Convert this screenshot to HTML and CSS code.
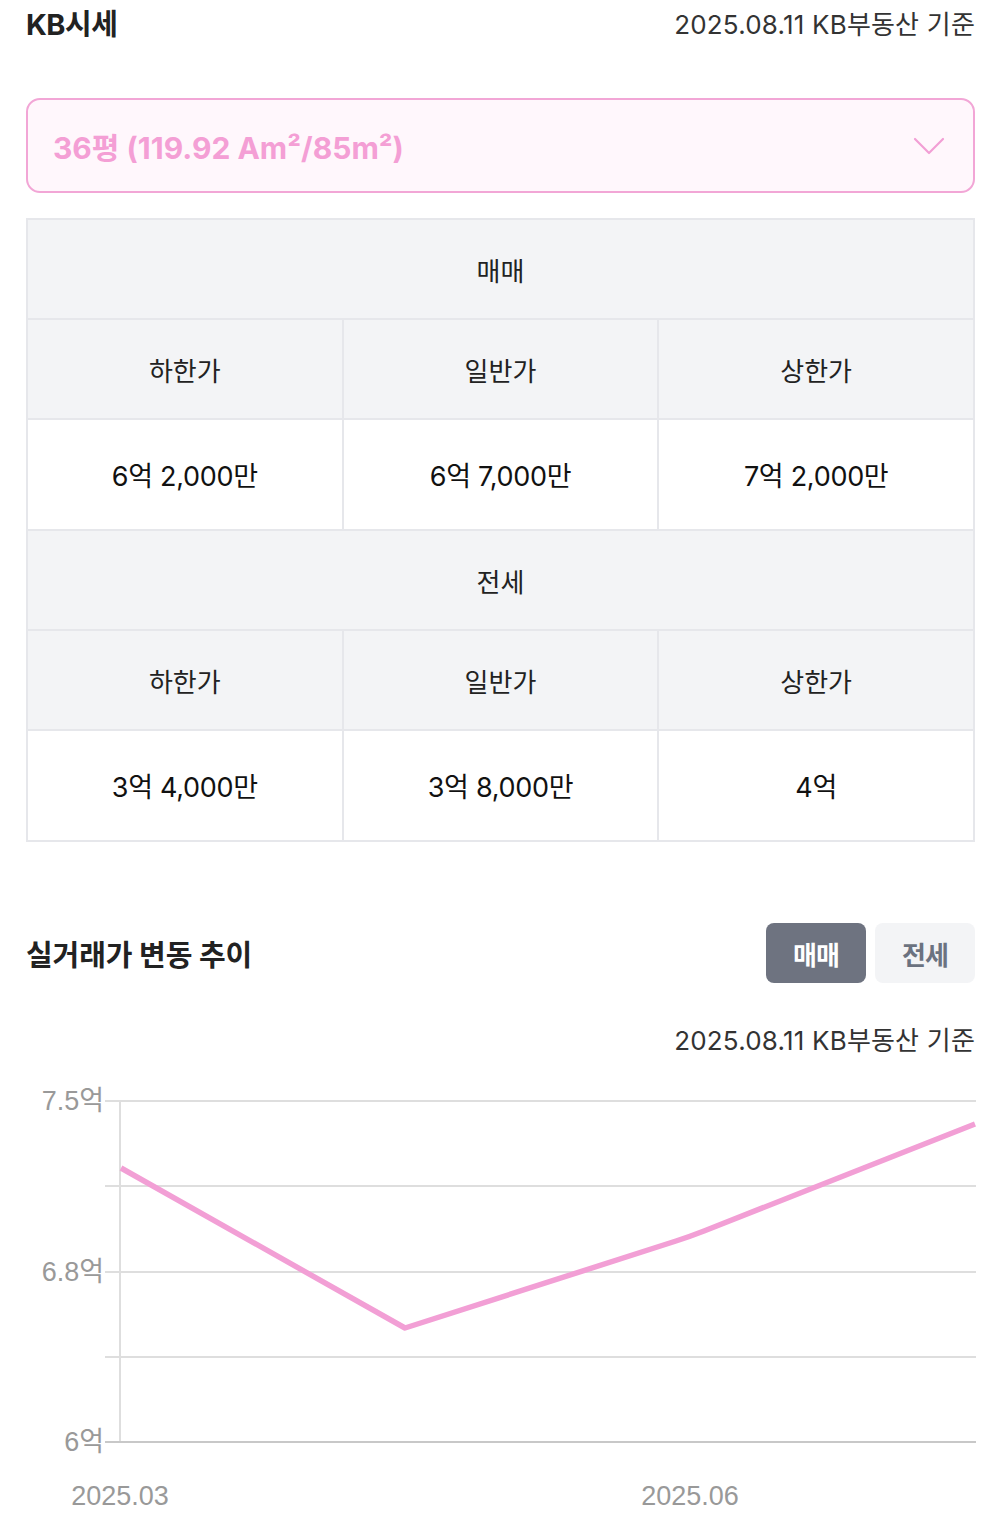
FILE: index.html
```html
<!DOCTYPE html>
<html lang="ko">
<head>
  <meta charset="UTF-8">
  <meta name="viewport" content="width=device-width, initial-scale=1.0">
  <link rel="stylesheet" href="styles.css">
  <title>KB시세</title>
</head>
<body>
  <div class="page">
    <div class="section-head">
      <h2 class="title">KB시세</h2>
      <span class="base-date">2025.08.11 KB부동산 기준</span>
    </div>

    <div class="area-select">
      <span class="area-text">36평 (119.92 Am²/85m²)</span>
      <svg class="chevron" width="32" height="20" viewBox="0 0 32 20">
        <path d="M2 3 L16 17 L30 3" fill="none" stroke="#f29fd5" stroke-width="2.2" stroke-linecap="round" stroke-linejoin="round"/>
      </svg>
    </div>

    <table class="price-table">
      <tr><th colspan="3">매매</th></tr>
      <tr><th>하한가</th><th>일반가</th><th>상한가</th></tr>
      <tr class="values"><td>6억 2,000만</td><td>6억 7,000만</td><td>7억 2,000만</td></tr>
      <tr><th colspan="3">전세</th></tr>
      <tr><th>하한가</th><th>일반가</th><th>상한가</th></tr>
      <tr class="values"><td>3억 4,000만</td><td>3억 8,000만</td><td>4억</td></tr>
    </table>

    <div class="chart-head">
      <h2 class="title chart-title">실거래가 변동 추이</h2>
      <div class="tabs">
        <button class="tab active">매매</button>
        <button class="tab">전세</button>
      </div>
    </div>
    <div class="chart-date">2025.08.11 KB부동산 기준</div>

    <svg class="chart" width="950" height="440" viewBox="0 0 950 440">
      <g stroke="#dedede" stroke-width="2">
        <line x1="79" y1="20" x2="950" y2="20"/>
        <line x1="79" y1="105" x2="950" y2="105"/>
        <line x1="79" y1="191" x2="950" y2="191"/>
        <line x1="79" y1="276" x2="950" y2="276"/>
        <line x1="94" y1="20" x2="94" y2="361"/>
      </g>
      <line x1="79" y1="361" x2="950" y2="361" stroke="#c8c8c8" stroke-width="2"/>
      <g class="axis-label" text-anchor="end">
        <text x="78" y="29">7.5억</text>
        <text x="78" y="200">6.8억</text>
        <text x="78" y="370">6억</text>
      </g>
      <g class="axis-label" text-anchor="middle">
        <text x="94" y="424">2025.03</text>
        <text x="664" y="424">2025.06</text>
      </g>
      <path d="M95 87 L379 247 L650 160 Q664 155.5 678 150 L949 43" fill="none" stroke="#f29fd5" stroke-width="5.5" stroke-linejoin="round"/>
    </svg>
  </div>
</body>
</html>
```

FILE: styles.css
```css
body {
  margin: 0;
  background: #fff;
  font-family: "Inter", "Noto Sans CJK KR", sans-serif;
  color: #222;
}

.page {
  padding: 0 25px 0 26px;
}

.section-head {
  display: flex;
  justify-content: space-between;
  align-items: center;
  height: 44px;
  margin-bottom: 54px;
}

.title {
  margin: 0;
  font-size: 29px;
  font-weight: 700;
  letter-spacing: -0.5px;
  color: #222;
}

.chart-title {
  font-size: 29px;
  letter-spacing: -0.1px;
}

.base-date {
  font-size: 26px;
  letter-spacing: 0.2px;
  color: #333;
}

.area-select {
  display: flex;
  align-items: center;
  justify-content: space-between;
  height: 91px;
  padding: 0 28px 0 25px;
  border: 2px solid #f2a6d6;
  border-radius: 14px;
  background: #fff7fc;
  margin-bottom: 25px;
}

.area-text {
  font-size: 30px;
  font-weight: 700;
  letter-spacing: 0;
  color: #f49fd5;
}

.price-table {
  width: 100%;
  table-layout: fixed;
  border-collapse: collapse;
  border: 2px solid #e6e7eb;
}

.price-table th,
.price-table td {
  border: 2px solid #e6e7eb;
  text-align: center;
  padding: 0;
}

.price-table th {
  height: 98px;
  background: #f3f4f6;
  font-size: 26px;
  font-weight: 400;
  color: #222;
}

.price-table td {
  height: 109px;
  background: #fff;
  font-size: 27px;
  letter-spacing: -0.3px;
  color: #111;
}

.chart-head {
  display: flex;
  justify-content: space-between;
  align-items: center;
  margin-top: 81px;
}

.tabs {
  display: flex;
  gap: 9px;
}

.tab {
  width: 100px;
  height: 60px;
  border: none;
  border-radius: 8px;
  background: #f3f4f6;
  color: #6b7280;
  font-family: "Noto Sans CJK KR", sans-serif;
  font-size: 26px;
  font-weight: 700;
  letter-spacing: -1px;
}

.tab.active {
  background: #6e7380;
  color: #fff;
}

.chart-date {
  text-align: right;
  margin-top: 37px;
  font-size: 26px;
  letter-spacing: 0.2px;
  color: #333;
}

.chart {
  display: block;
  margin-top: 24px;
}

.axis-label {
  font-family: "Liberation Sans", "Noto Sans CJK KR", sans-serif;
  font-size: 27px;
  fill: #999;
}
```
